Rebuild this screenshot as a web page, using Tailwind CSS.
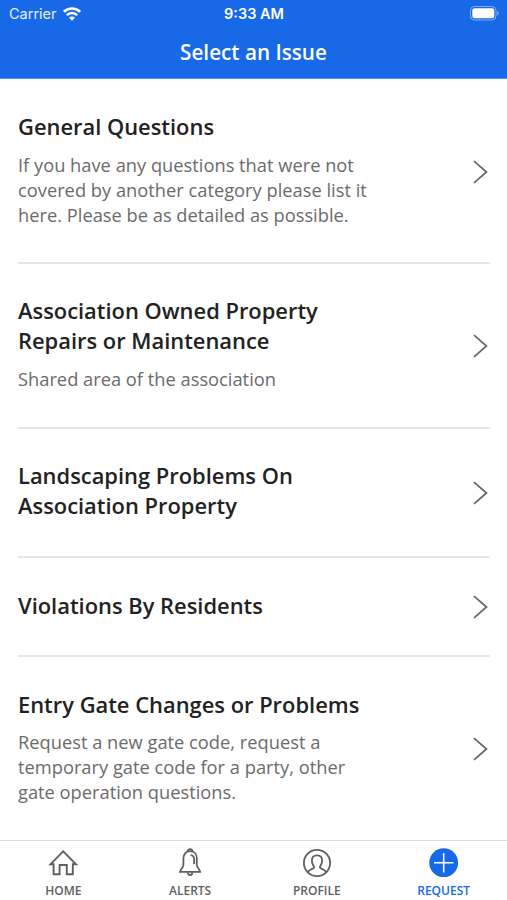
<!DOCTYPE html>
<html lang="en">
<head>
  <meta charset="UTF-8">
  <meta name="viewport" content="width=device-width, initial-scale=1.0">
  <title>Select an Issue</title>
  <script src="https://cdn.jsdelivr.net/npm/@tailwindcss/browser@4"></script>
</head>
<body class="bg-white h-[900px] flex flex-col overflow-hidden font-['Open_Sans',sans-serif] text-[#222]">
  <!-- Header -->
  <header class="bg-[#1769e8] text-white h-[79px] shrink-0 border-b border-[#5d97ef]">
    <div class="grid grid-cols-3 items-center h-[27px] pl-[9px] pr-[8px] font-[Inter,sans-serif]">
      <div class="flex items-center gap-1.5 text-[14.5px] text-white/90">
        <span>Carrier</span>
        <svg class="w-[18px] h-[14px]" viewBox="0 0 18 14" fill="none" stroke="white" stroke-width="2.6">
          <path d="M.9 4.8a11.5 11.5 0 0 1 16.2 0M3.8 8.1a7.4 7.4 0 0 1 10.4 0"/>
          <path d="M6 10.7a4.2 4.2 0 0 1 6 0L9 13.8z" fill="white" stroke="none"/>
        </svg>
      </div>
      <div class="text-center text-[14.5px] font-semibold">9:33 AM</div>
      <svg class="justify-self-end w-[30px] h-[15px]" viewBox="0 0 30 15" fill="none">
        <rect x="1.5" y="0.5" width="25.5" height="13.5" rx="4" stroke="white" stroke-opacity=".45"/>
        <rect x="3.3" y="2.3" width="22" height="9.9" rx="2.2" fill="white"/>
        <path d="M28.300 5c1.800.7 1.800 3.800 0 4.500z" fill="white" fill-opacity=".5"/>
      </svg>
    </div>
    <h1 class="text-center text-[20.7px] leading-[50px] font-semibold">Select an Issue</h1>
  </header>

  <!-- Issue list -->
  <main class="flex-1 min-h-0 overflow-hidden pl-[18px] pr-[17px]">
    <a href="#" class="flex items-center justify-between h-[185px] pt-0.5 border-b-2 border-[#e6e6e6]">
      <div class="self-start pt-[31px]">
        <h2 class="text-[21.9px] leading-[30px] font-semibold">General Questions</h2>
        <p class="mt-2.5 text-[18.3px] leading-[25px] text-[#6b6b6b]">If you have any questions that were not<br>covered by another category please list it<br>here. Please be as detailed as possible.</p>
      </div>
      <svg class="w-4 h-6 mr-0.5" viewBox="0 0 16 24" fill="none" stroke="#666" stroke-width="1.7"><path d="M2 1.2 14.5 12 2 22.8"/></svg>
    </a>

    <a href="#" class="flex items-center justify-between h-[165px] border-b-2 border-[#e6e6e6]">
      <div class="self-start pt-[32px]">
        <h2 class="text-[21.9px] leading-[30px] font-semibold">Association Owned Property<br>Repairs or Maintenance</h2>
        <p class="mt-2.5 text-[18.3px] leading-[25px] text-[#6b6b6b]">Shared area of the association</p>
      </div>
      <svg class="w-4 h-6 mr-0.5" viewBox="0 0 16 24" fill="none" stroke="#666" stroke-width="1.7"><path d="M2 1.2 14.5 12 2 22.8"/></svg>
    </a>

    <a href="#" class="flex items-center justify-between h-[129px] pt-px border-b-2 border-[#e6e6e6]">
      <div class="self-start pt-[31px]">
        <h2 class="text-[21.9px] leading-[30px] font-semibold">Landscaping Problems On<br>Association Property</h2>
      </div>
      <svg class="w-4 h-6 mr-0.5" viewBox="0 0 16 24" fill="none" stroke="#666" stroke-width="1.7"><path d="M2 1.2 14.5 12 2 22.8"/></svg>
    </a>

    <a href="#" class="flex items-center justify-between h-[99px] pt-px border-b-2 border-[#e6e6e6]">
      <div class="self-start pt-[32px]">
        <h2 class="text-[21.9px] leading-[30px] font-semibold">Violations By Residents</h2>
      </div>
      <svg class="w-4 h-6 mr-0.5" viewBox="0 0 16 24" fill="none" stroke="#666" stroke-width="1.7"><path d="M2 1.2 14.5 12 2 22.8"/></svg>
    </a>

    <a href="#" class="flex items-center justify-between h-[184px]">
      <div class="self-start pt-[33px]">
        <h2 class="text-[21.9px] leading-[30px] font-semibold">Entry Gate Changes or Problems</h2>
        <p class="mt-[9px] text-[18.3px] leading-[25px] text-[#6b6b6b]">Request a new gate code, request a<br>temporary gate code for a party, other<br>gate operation questions.</p>
      </div>
      <svg class="w-4 h-6 mr-0.5" viewBox="0 0 16 24" fill="none" stroke="#666" stroke-width="1.7"><path d="M2 1.2 14.5 12 2 22.8"/></svg>
    </a>
  </main>

  <!-- Tab bar -->
  <nav class="grid grid-cols-4 h-[60px] shrink-0 bg-white border-t border-[#dcdcdc] text-[12px] leading-[16px] font-semibold text-[#606060]">
    <a href="#" class="flex flex-col items-center pt-[7px] gap-[5px]">
      <svg class="w-[30px] h-[30px]" viewBox="0 0 30 30" fill="none" stroke="currentColor" stroke-width="1.9">
        <path d="M2.400 16.300 15.200 3.400 28 16.300h-3.200v10h-6V17h-7.200v9.300h-6v-10z"/>
      </svg>
      <span>HOME</span>
    </a>
    <a href="#" class="flex flex-col items-center pt-[7px] gap-[5px]">
      <svg class="w-[30px] h-[30px]" viewBox="0 0 30 30" fill="none" stroke="currentColor" stroke-width="1.8">
        <path d="M12.900 3.400a2.200 2.200 0 0 1 4.400 0"/>
        <path d="M15.100 3.200c-4.400 0-6.700 3.300-6.700 7.300v6.200c0 3-2.700 4-3.400 7.200h20.200c-.7-3.200-3.400-4.200-3.400-7.200v-6.200c0-4-2.300-7.300-6.700-7.300z"/>
        <path d="M12.900 24.400a2.200 2.600 0 0 0 4.400 0M15.600 7.100c2.300.2 3.500 1.600 3.500 4v4.800"/>
      </svg>
      <span>ALERTS</span>
    </a>
    <a href="#" class="flex flex-col items-center pt-[7px] gap-[5px]">
      <svg class="w-[30px] h-[30px]" viewBox="0 0 30 30" fill="none" stroke="currentColor" stroke-width="1.8">
        <circle cx="15" cy="15" r="13.100"/>
        <path d="M5.700 24c1-1.900 3.200-2.700 5.500-3.700 1-.5 1.100-1.500.4-2.400-1.200-1.500-1.700-3.300-1.700-5.300 0-3.300 2-5.300 5.100-5.300s5.100 2 5.100 5.300c0 2-.5 3.800-1.700 5.300-.7.900-.6 1.900.4 2.400 2.300 1 4.500 1.800 5.500 3.700"/>
      </svg>
      <span>PROFILE</span>
    </a>
    <a href="#" class="flex flex-col items-center pt-[7px] gap-[5px] text-[#1769e8]">
      <svg class="w-[30px] h-[30px]" viewBox="0 0 30 30" fill="none">
        <circle cx="14.700" cy="14.700" r="14.400" fill="currentColor"/>
        <path d="M14.700 5v19.400M5 14.700h19.400" stroke="white" stroke-width="1.600"/>
      </svg>
      <span>REQUEST</span>
    </a>
  </nav>
</body>
</html>
